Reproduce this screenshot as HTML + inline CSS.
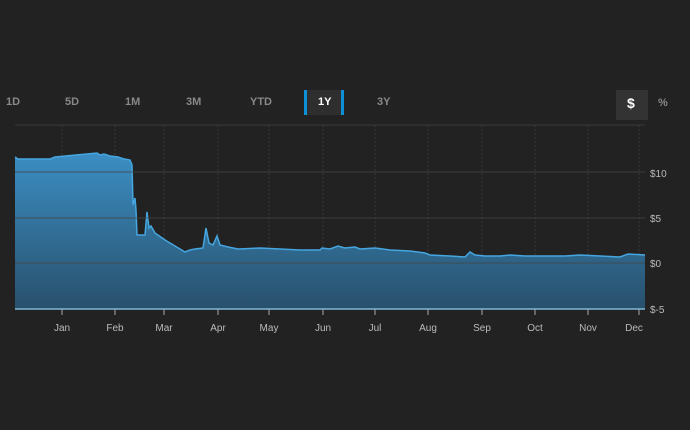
<!DOCTYPE html><html><head><style>
body{margin:0;width:690px;height:430px;background:#222;overflow:hidden;font-family:"Liberation Sans",sans-serif;}
.t{position:absolute;top:96px;font-size:11px;font-weight:bold;color:#888;}
.ax{font-size:10px;fill:#bbb;font-family:"Liberation Sans",sans-serif;}
</style></head><body>
<div class="t" style="left:6px">1D</div>
<div class="t" style="left:65px">5D</div>
<div class="t" style="left:125px">1M</div>
<div class="t" style="left:186px">3M</div>
<div class="t" style="left:250px">YTD</div>
<div style="position:absolute;left:304px;top:90px;width:40px;height:25px;background:#2e2e2e;border-left:3px solid #0a8fd8;border-right:3px solid #0a8fd8;box-sizing:border-box"></div>
<div class="t" style="left:318px;color:#fff">1Y</div>
<div class="t" style="left:377px">3Y</div>
<div style="position:absolute;left:616px;top:90px;width:32px;height:30px;background:#333"></div>
<div class="t" style="left:627px;top:95px;color:#fff;font-size:14px">$</div>
<div class="t" style="left:658px;top:97px">%</div>
<svg width="690" height="430" style="position:absolute;left:0;top:0">
<defs><linearGradient id="g" x1="0" y1="0" x2="0" y2="1"><stop offset="0" stop-color="#3b8ec4"/><stop offset="1" stop-color="#28506c"/></linearGradient></defs>
<line x1="15" y1="125" x2="645" y2="125" stroke="#3a3a3a"/>
<g stroke="#3a3a3a" stroke-dasharray="2,2"><line x1="62" y1="125" x2="62" y2="309"/><line x1="115" y1="125" x2="115" y2="309"/><line x1="164" y1="125" x2="164" y2="309"/><line x1="218" y1="125" x2="218" y2="309"/><line x1="269" y1="125" x2="269" y2="309"/><line x1="323" y1="125" x2="323" y2="309"/><line x1="375" y1="125" x2="375" y2="309"/><line x1="428" y1="125" x2="428" y2="309"/><line x1="482" y1="125" x2="482" y2="309"/><line x1="535" y1="125" x2="535" y2="309"/><line x1="588" y1="125" x2="588" y2="309"/><line x1="639" y1="125" x2="639" y2="309"/></g>
<path d="M15,157 L18,159 L50,159 L55,157 L97,153 L100,155 L104,154 L110,156 L118,157 L124,159 L130,160 L132,165 L133,205 L135,198 L136,210 L137,235 L145,235 L147,212 L149,228 L151,226 L155,233 L165,240 L175,246 L185,252 L190,250 L195,249 L203,248 L206,228 L209,243 L213,245 L217,236 L220,245 L228,247 L238,249 L260,248 L280,249 L300,250 L320,250 L322,248 L330,249 L338,246 L345,248 L355,247 L360,249 L375,248 L390,250 L410,251 L425,253 L430,255 L450,256 L465,257 L470,252 L475,255 L485,256 L500,256 L510,255 L525,256 L545,256 L565,256 L580,255 L600,256 L620,257 L628,254 L645,255 L645,309 L15,309 Z" fill="url(#g)"/>
<path d="M15,157 L18,159 L50,159 L55,157 L97,153 L100,155 L104,154 L110,156 L118,157 L124,159 L130,160 L132,165 L133,205 L135,198 L136,210 L137,235 L145,235 L147,212 L149,228 L151,226 L155,233 L165,240 L175,246 L185,252 L190,250 L195,249 L203,248 L206,228 L209,243 L213,245 L217,236 L220,245 L228,247 L238,249 L260,248 L280,249 L300,250 L320,250 L322,248 L330,249 L338,246 L345,248 L355,247 L360,249 L375,248 L390,250 L410,251 L425,253 L430,255 L450,256 L465,257 L470,252 L475,255 L485,256 L500,256 L510,255 L525,256 L545,256 L565,256 L580,255 L600,256 L620,257 L628,254 L645,255" fill="none" stroke="#45a6e0" stroke-width="1.5"/>
<g stroke="#444" stroke-opacity="0.8"><line x1="15" y1="172" x2="645" y2="172"/><line x1="15" y1="218" x2="645" y2="218"/><line x1="15" y1="263" x2="645" y2="263"/></g>
<line x1="15" y1="309" x2="645" y2="309" stroke="#7fb8d8" stroke-width="1.5"/>
<g stroke="#aaa"><line x1="62" y1="309" x2="62" y2="315"/><line x1="115" y1="309" x2="115" y2="315"/><line x1="164" y1="309" x2="164" y2="315"/><line x1="218" y1="309" x2="218" y2="315"/><line x1="269" y1="309" x2="269" y2="315"/><line x1="323" y1="309" x2="323" y2="315"/><line x1="375" y1="309" x2="375" y2="315"/><line x1="428" y1="309" x2="428" y2="315"/><line x1="482" y1="309" x2="482" y2="315"/><line x1="535" y1="309" x2="535" y2="315"/><line x1="588" y1="309" x2="588" y2="315"/><line x1="639" y1="309" x2="639" y2="315"/></g>
<g class="ax" text-anchor="middle"><text x="62" y="331">Jan</text><text x="115" y="331">Feb</text><text x="164" y="331">Mar</text><text x="218" y="331">Apr</text><text x="269" y="331">May</text><text x="323" y="331">Jun</text><text x="375" y="331">Jul</text><text x="428" y="331">Aug</text><text x="482" y="331">Sep</text><text x="535" y="331">Oct</text><text x="588" y="331">Nov</text><text x="634" y="331">Dec</text></g>
<g class="ax"><text x="650" y="177">$10</text><text x="650" y="222">$5</text><text x="650" y="267">$0</text><text x="650" y="313">$-5</text></g>
</svg>
</body></html>
